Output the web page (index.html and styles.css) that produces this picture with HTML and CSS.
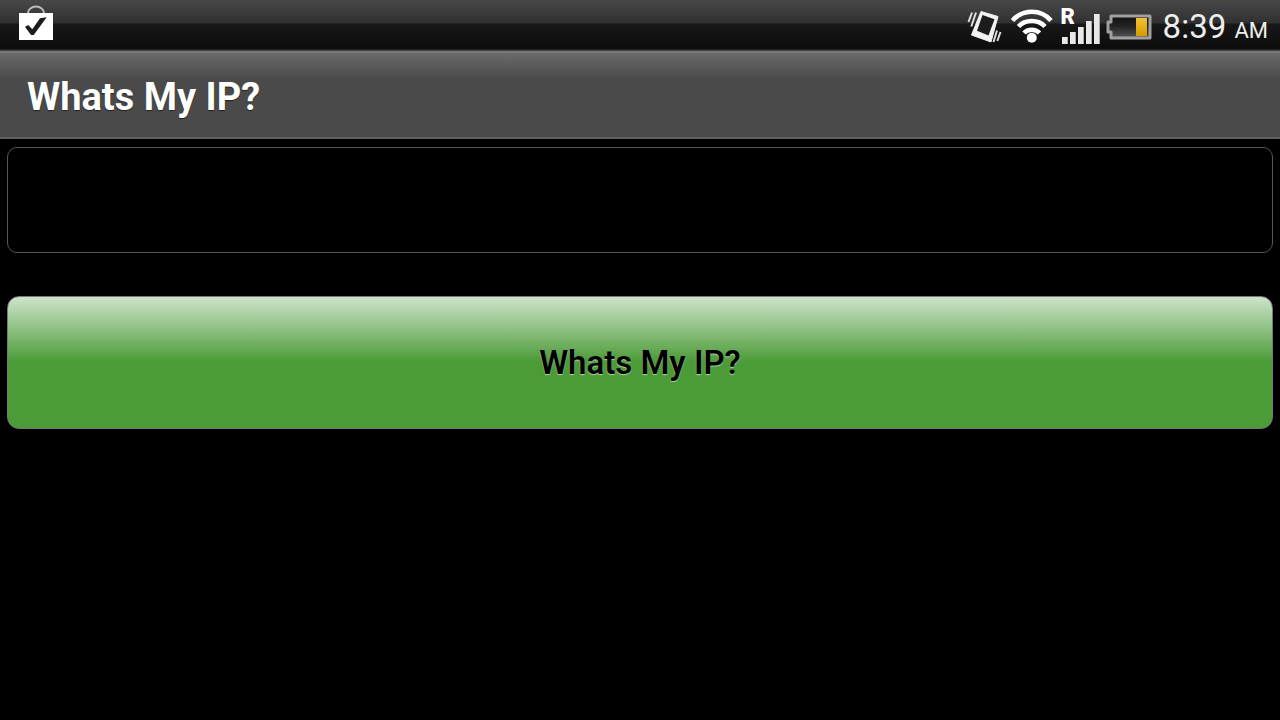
FILE: index.html
```html
<!DOCTYPE html>
<html lang="en">
<head>
  <meta charset="UTF-8">
  <meta name="viewport" content="width=device-width, initial-scale=1.0">
  <title>Whats My IP?</title>
  <link rel="stylesheet" href="styles.css">
</head>
<body>
  <div class="status-bar">
    <svg class="icon-store" width="36" height="36" viewBox="0 0 36 36" aria-hidden="true">
      <path d="M10 9V8a8 6.500 0 0 1 16 0v1" fill="none" stroke="#bbb" stroke-width="2"/>
      <path d="M1 8h34v27H1z" fill="#fff"/>
      <path d="M7 21.700L10.300 20 14.300 24.300 22 13.300 28.700 12.300 15.700 30H13z" fill="#1c1c1c"/>
    </svg>

    <div class="indicators">
      <svg width="36" height="36" viewBox="0 0 36 36" aria-hidden="true">
        <path d="M14 3.500L31 8.500 24 34 4.500 27z" fill="#f2f2f2" stroke="#f2f2f2" stroke-linejoin="round"/>
        <path d="M15.500 7L27.500 11.300 21.500 27.500 10 22.700z" fill="#1c1c1c"/>
        <path d="M5 4.500L1.500 14M9 4.500L4.300 18.500M33.500 24L30.300 33M30 22.500L26.500 34" fill="none" stroke="#ddd" stroke-width="2"/>
      </svg>

      <svg width="42" height="36" viewBox="0 0 42 36" aria-hidden="true">
        <g fill="none" stroke="#fff" stroke-width="4.500">
          <path d="M1.500 12.500C12 0.800 30 0.800 40 12.500"/>
          <path d="M7.500 18.500C14 11 27.500 11 34 18.500"/>
          <path d="M13 25C17 20.500 24.500 20.500 28.500 25"/>
        </g>
        <circle cx="20.800" cy="29.700" r="5" fill="#fff"/>
      </svg>

      <div class="signal">
        <span class="roaming">R</span>
        <svg width="40" height="36" viewBox="0 0 40 36" aria-hidden="true">
          <path d="M1 29h6v7H1zM9 24h6v12H9zM17 19h6v17h-6zM25 13h6v23h-6zM33 6h6v30h-6z" fill="#e8e8e8"/>
          <path d="M6 29h1v7H6zM14 24h1v12h-1zM22 19h1v17h-1zM30 13h1v23h-1zM38 6h1v30h-1z" fill="#aaa"/>
        </svg>
      </div>

      <svg class="battery" width="46" height="28" viewBox="0 0 46 28" aria-hidden="true">
        <defs>
          <linearGradient id="cell" x1="0" y1="0" x2="0" y2="1">
            <stop offset="0" stop-color="#111"/>
            <stop offset="0.450" stop-color="#222"/>
            <stop offset="1" stop-color="#555"/>
          </linearGradient>
          <linearGradient id="charge" x1="0" y1="0" x2="0" y2="1">
            <stop offset="0" stop-color="#f3c232"/>
            <stop offset="1" stop-color="#d79a00"/>
          </linearGradient>
        </defs>
        <path d="M5 3h39v22H5v-6H2V9h3z" fill="url(#cell)" stroke="#a0a0a0" stroke-width="3" stroke-linejoin="round"/>
        <path d="M30 5h11v18H30z" fill="url(#charge)"/>
      </svg>

      <time class="clock" datetime="08:39">8:39 <small>AM</small></time>
    </div>
  </div>

  <header class="title-bar">
    <h1>Whats My IP?</h1>
  </header>

  <main class="content">
    <input class="ip-field" type="text" aria-label="IP address" readonly>
    <button class="ip-button" type="button">Whats My IP?</button>
  </main>
</body>
</html>
```

FILE: styles.css
```css
* {
  box-sizing: border-box;
}
body {
  margin: 0;
  background-color: #000;
  font-family: Roboto, "Liberation Sans", sans-serif;
}
svg {
  display: block;
}
.status-bar {
  display: flex;
  justify-content: space-between;
  height: 51px;
  padding: 0 12px 0 18px;
  background: linear-gradient(#484848 0, #303030 23px, #181818 24px, #0c0c0c 49px, #404040 50px);
}
.icon-store {
  margin-top: 5px;
}
.indicators {
  display: flex;
  align-items: flex-start;
  padding-top: 8px;
}
.indicators svg {
  margin-right: 8px;
}
.signal {
  position: relative;
}
.indicators .signal svg {
  margin-right: 5px;
}
.roaming {
  position: absolute;
  top: -2px;
  left: 0;
  color: #fff;
  font-size: 22px;
  font-weight: 900;
  line-height: 22px;
}
.indicators .battery {
  margin-top: 5px;
  margin-right: 11px;
}
.clock {
  color: #eee;
  font-size: 33px;
  line-height: 38px;
}
.clock small {
  font-size: 22px;
}
.title-bar {
  padding: 22px 27px 18px;
  border-top: 2px solid #787878;
  border-bottom: 2px solid #606060;
  background: linear-gradient(#6a6a6a 0, #4a4a4a 26px);
}
.title-bar h1 {
  margin: 0;
  color: #fff;
  font-size: 38px;
  line-height: 44px;
  text-shadow: 0 1px 1px #222;
}
.content {
  display: flex;
  flex-direction: column;
  gap: 43px;
  padding: 8px 7px;
}
.ip-field {
  width: 100%;
  height: 106px;
  padding: 0 24px;
  border: 1px solid #555;
  border-radius: 10px;
  background-color: #000;
  color: #fff;
  font: inherit;
  font-size: 32px;
}
.ip-button {
  height: 133px;
  border: 1px solid #777;
  border-radius: 12px;
  background: linear-gradient(#cfe4ca 0, #88bd7c 36px, #4b9b37 66px) border-box;
  color: #000;
  font: inherit;
  font-size: 33px;
  font-weight: 600;
  text-shadow: 0 1px 1px #b5d5ad;
  cursor: pointer;
}
```
